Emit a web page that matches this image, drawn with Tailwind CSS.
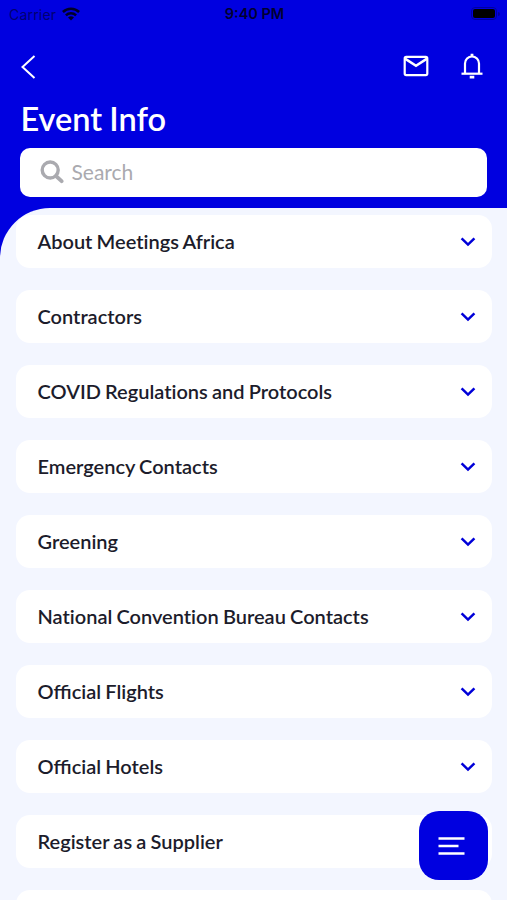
<!DOCTYPE html>
<html lang="en">
<head>
  <meta charset="UTF-8">
  <meta name="viewport" content="width=device-width, initial-scale=1.0">
  <title>Event Info</title>
  <script src="https://cdn.jsdelivr.net/npm/@tailwindcss/browser@4"></script>
</head>
<body class="bg-[#0000e0] font-[Lato,sans-serif]">

  <svg class="hidden">
    <symbol id="chevron" viewBox="0 0 16 10">
      <path d="M1.6 1.3 8 7.6l6.4-6.3" fill="none" stroke="currentColor" stroke-width="2.5"/>
    </symbol>
  </svg>

  <div class="relative flex flex-col h-[900px] w-full overflow-hidden">

    <!-- Status Bar -->
    <div class="grid grid-cols-3 items-center h-7 pl-[9px] pr-[7px] shrink-0 font-[Inter,sans-serif] text-[14px] text-[#000030]">
      <div class="flex items-center gap-[6px]">
        <span class="text-[#000070] tracking-[0.2px]">Carrier</span>
        <svg class="w-[18px] h-[14px] -mt-px" viewBox="0 0 18 14" fill="none" stroke="#000028" stroke-width="2.5">
          <path d="M.9 5a11.6 11.6 0 0 1 16.2 0M3.9 8.4a7.3 7.3 0 0 1 10.2 0"/>
          <path d="M9 13.6 6 10.6a4.3 4.3 0 0 1 6 0z" fill="#000028" stroke="none"/>
        </svg>
      </div>
      <span class="text-center text-[14.5px] font-semibold whitespace-nowrap">9:40 PM</span>
      <div class="flex items-center justify-end gap-px">
        <span class="w-[26px] h-[13px] rounded-[4px] border border-[#0000a0] p-px -mt-px"><span class="block h-full rounded-[2px] bg-black"></span></span>
        <span class="w-[2px] h-1 rounded-r bg-[#0000a0] -mt-px"></span>
      </div>
    </div>

    <!-- Header -->
    <header class="flex flex-col h-[180px] shrink-0 px-5 text-white">
      <div class="flex items-center h-[76px]">
        <svg class="w-4 h-6 mt-[2px]" viewBox="0 0 16 24" fill="none" stroke="currentColor" stroke-width="2">
          <path d="M14.5 1 2.5 12l12 11"/>
        </svg>
        <svg class="w-[26px] h-[22px] ml-auto -mt-px" viewBox="0 0 26 22" fill="none" stroke="currentColor" stroke-width="2.2">
          <rect x="1.7" y="1.9" width="22.6" height="18.2" rx="1.5"/>
          <path d="M2 3.6 13 10.8 24 3.6" stroke-width="2.5"/>
        </svg>
        <svg class="w-[22px] h-[26px] ml-8 mr-1 -mt-px" viewBox="0 0 22 26" fill="none" stroke="currentColor" stroke-width="2.2">
          <path d="M4 20.4V10.5a7 7 0 0 1 14 0v9.9"/>
          <path d="M.5 20.7h21"/>
          <path d="M11 .8v3M8.7 24.2h4.6" stroke-width="2.8"/>
        </svg>
      </div>
      <h1 class="h-11 pl-[0.5px] text-[32.5px] leading-[29px] font-semibold [word-spacing:-1px]">Event Info</h1>
      <div class="flex items-center h-[49px] pl-[19.5px] gap-2 rounded-[10px] bg-white text-[#aaaaaf]">
        <svg class="w-6 h-6 -mt-px" viewBox="0 0 24 24" fill="none" stroke="currentColor" stroke-width="3.4">
          <circle cx="10.2" cy="10" r="8"/>
          <path d="m16 16 5.6 5.2" stroke-width="3.8" stroke-linecap="round"/>
        </svg>
        <span class="text-[21px] -mt-px">Search</span>
      </div>
    </header>

    <!-- Sections -->
    <main class="flex-1 min-h-0 overflow-hidden rounded-tl-[50px] bg-[#f3f6ff] pl-4 pr-[15px] pt-[7px]">
      <ul class="flex flex-col gap-[22px] text-[20px] leading-[28px] font-semibold text-[#1c1c2b] [word-spacing:-0.8px]">
        <li class="flex items-center justify-between h-[53px] shrink-0 rounded-[14px] bg-white pl-[21.5px] pr-4">
          <span class="-mt-px [font-variant-ligatures:none]">About Meetings Africa</span>
          <svg class="w-4 h-[10px] text-[#0000d8]"><use href="#chevron"/></svg>
        </li>
        <li class="flex items-center justify-between h-[53px] shrink-0 rounded-[14px] bg-white pl-[21.5px] pr-4">
          <span class="-mt-px">Contractors</span>
          <svg class="w-4 h-[10px] text-[#0000d8]"><use href="#chevron"/></svg>
        </li>
        <li class="flex items-center justify-between h-[53px] shrink-0 rounded-[14px] bg-white pl-[21.5px] pr-4">
          <span class="-mt-px [font-variant-ligatures:none]">COVID Regulations and Protocols</span>
          <svg class="w-4 h-[10px] text-[#0000d8]"><use href="#chevron"/></svg>
        </li>
        <li class="flex items-center justify-between h-[53px] shrink-0 rounded-[14px] bg-white pl-[21.5px] pr-4">
          <span class="-mt-px">Emergency Contacts</span>
          <svg class="w-4 h-[10px] text-[#0000d8]"><use href="#chevron"/></svg>
        </li>
        <li class="flex items-center justify-between h-[53px] shrink-0 rounded-[14px] bg-white pl-[21.5px] pr-4">
          <span class="-mt-px">Greening</span>
          <svg class="w-4 h-[10px] text-[#0000d8]"><use href="#chevron"/></svg>
        </li>
        <li class="flex items-center justify-between h-[53px] shrink-0 rounded-[14px] bg-white pl-[21.5px] pr-4">
          <span class="-mt-px [font-variant-ligatures:none]">National Convention Bureau Contacts</span>
          <svg class="w-4 h-[10px] text-[#0000d8]"><use href="#chevron"/></svg>
        </li>
        <li class="flex items-center justify-between h-[53px] shrink-0 rounded-[14px] bg-white pl-[21.5px] pr-4">
          <span class="-mt-px">Official Flights</span>
          <svg class="w-4 h-[10px] text-[#0000d8]"><use href="#chevron"/></svg>
        </li>
        <li class="flex items-center justify-between h-[53px] shrink-0 rounded-[14px] bg-white pl-[21.5px] pr-4">
          <span class="-mt-px">Official Hotels</span>
          <svg class="w-4 h-[10px] text-[#0000d8]"><use href="#chevron"/></svg>
        </li>
        <li class="flex items-center justify-between h-[53px] shrink-0 rounded-[14px] bg-white pl-[21.5px] pr-4">
          <span class="-mt-px">Register as a Supplier</span>
        </li>
        <li class="h-[53px] shrink-0 rounded-[14px] bg-white"></li>
      </ul>
    </main>

    <!-- Floating Menu Button -->
    <button class="absolute right-[19px] bottom-5 flex items-center justify-center w-[69px] h-[69px] rounded-[20px] bg-[#0000e0] text-white">
      <svg class="w-[27px] h-5 mr-1" viewBox="0 0 27 20" stroke="currentColor" stroke-width="2.4">
        <path d="M.5 2.5h26M.5 10h20M.5 17.5h26"/>
      </svg>
    </button>
  </div>

</body>
</html>
